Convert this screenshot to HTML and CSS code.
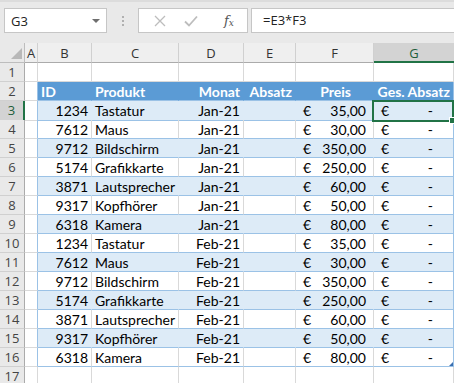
FILE: index.html
```html
<!DOCTYPE html>
<html lang="de">
<head>
<meta charset="utf-8">
<title>Excel</title>
<link rel="stylesheet" href="styles.css">
</head>
<body>
<div class="app">
  <div class="toolbar">
    <div class="namebox"><span>G3</span><span class="arrow"></span></div>
    <div class="dots"><i></i><i></i><i></i></div>
    <div class="fbtns">
      <svg class="ic" width="12" height="12" viewBox="0 0 12 12"><path d="M1 1 L11 11 M11 1 L1 11" stroke="#bdbdbd" stroke-width="1.3" fill="none"/></svg>
      <svg class="ic" width="14" height="12" viewBox="0 0 14 12"><path d="M1 6.5 L5 10.5 L13 1.5" stroke="#bdbdbd" stroke-width="1.8" fill="none"/></svg>
      <span class="fx">f<sub>x</sub></span>
    </div>
    <div class="finput">=E3*F3</div>
  </div>

  <div class="sheet">
    <div class="row hdr">
      <div class="corner"><span class="tri"></span></div>
      <div class="ch">A</div><div class="ch">B</div><div class="ch">C</div><div class="ch">D</div><div class="ch">E</div><div class="ch">F</div><div class="ch sel">G</div>
    </div>
    <div class="row r1">
      <div class="rh">1</div><div class="c"></div><div class="c"></div><div class="c"></div><div class="c"></div><div class="c"></div><div class="c"></div><div class="c"></div>
    </div>
    <div class="row thead">
      <div class="rh">2</div><div class="c a"></div>
      <div class="c t">ID</div><div class="c t">Produkt</div><div class="c t r">Monat</div><div class="c t r">Absatz</div><div class="c t r price">Preis</div><div class="c t r last">Ges. Absatz</div>
    </div>
    <div class="row band">
      <div class="rh sel">3</div><div class="c a"></div>
      <div class="c t r">1234</div><div class="c t">Tastatur</div><div class="c t r">Jan-21</div><div class="c t"></div>
      <div class="c t acc"><span>€</span><span>35,00</span></div>
      <div class="c t last acc g active"><span>€</span><span>-</span><i class="handle"></i></div>
    </div>
    <div class="row plain">
      <div class="rh">4</div><div class="c a"></div>
      <div class="c t r">7612</div><div class="c t">Maus</div><div class="c t r">Jan-21</div><div class="c t"></div>
      <div class="c t acc"><span>€</span><span>30,00</span></div>
      <div class="c t last acc g"><span>€</span><span>-</span></div>
    </div>
    <div class="row band">
      <div class="rh">5</div><div class="c a"></div>
      <div class="c t r">9712</div><div class="c t">Bildschirm</div><div class="c t r">Jan-21</div><div class="c t"></div>
      <div class="c t acc"><span>€</span><span>350,00</span></div>
      <div class="c t last acc g"><span>€</span><span>-</span></div>
    </div>
    <div class="row plain">
      <div class="rh">6</div><div class="c a"></div>
      <div class="c t r">5174</div><div class="c t">Grafikkarte</div><div class="c t r">Jan-21</div><div class="c t"></div>
      <div class="c t acc"><span>€</span><span>250,00</span></div>
      <div class="c t last acc g"><span>€</span><span>-</span></div>
    </div>
    <div class="row band">
      <div class="rh">7</div><div class="c a"></div>
      <div class="c t r">3871</div><div class="c t">Lautsprecher</div><div class="c t r">Jan-21</div><div class="c t"></div>
      <div class="c t acc"><span>€</span><span>60,00</span></div>
      <div class="c t last acc g"><span>€</span><span>-</span></div>
    </div>
    <div class="row plain">
      <div class="rh">8</div><div class="c a"></div>
      <div class="c t r">9317</div><div class="c t">Kopfhörer</div><div class="c t r">Jan-21</div><div class="c t"></div>
      <div class="c t acc"><span>€</span><span>50,00</span></div>
      <div class="c t last acc g"><span>€</span><span>-</span></div>
    </div>
    <div class="row band">
      <div class="rh">9</div><div class="c a"></div>
      <div class="c t r">6318</div><div class="c t">Kamera</div><div class="c t r">Jan-21</div><div class="c t"></div>
      <div class="c t acc"><span>€</span><span>80,00</span></div>
      <div class="c t last acc g"><span>€</span><span>-</span></div>
    </div>
    <div class="row plain">
      <div class="rh">10</div><div class="c a"></div>
      <div class="c t r">1234</div><div class="c t">Tastatur</div><div class="c t r">Feb-21</div><div class="c t"></div>
      <div class="c t acc"><span>€</span><span>35,00</span></div>
      <div class="c t last acc g"><span>€</span><span>-</span></div>
    </div>
    <div class="row band">
      <div class="rh">11</div><div class="c a"></div>
      <div class="c t r">7612</div><div class="c t">Maus</div><div class="c t r">Feb-21</div><div class="c t"></div>
      <div class="c t acc"><span>€</span><span>30,00</span></div>
      <div class="c t last acc g"><span>€</span><span>-</span></div>
    </div>
    <div class="row plain">
      <div class="rh">12</div><div class="c a"></div>
      <div class="c t r">9712</div><div class="c t">Bildschirm</div><div class="c t r">Feb-21</div><div class="c t"></div>
      <div class="c t acc"><span>€</span><span>350,00</span></div>
      <div class="c t last acc g"><span>€</span><span>-</span></div>
    </div>
    <div class="row band">
      <div class="rh">13</div><div class="c a"></div>
      <div class="c t r">5174</div><div class="c t">Grafikkarte</div><div class="c t r">Feb-21</div><div class="c t"></div>
      <div class="c t acc"><span>€</span><span>250,00</span></div>
      <div class="c t last acc g"><span>€</span><span>-</span></div>
    </div>
    <div class="row plain">
      <div class="rh">14</div><div class="c a"></div>
      <div class="c t r">3871</div><div class="c t">Lautsprecher</div><div class="c t r">Feb-21</div><div class="c t"></div>
      <div class="c t acc"><span>€</span><span>60,00</span></div>
      <div class="c t last acc g"><span>€</span><span>-</span></div>
    </div>
    <div class="row band">
      <div class="rh">15</div><div class="c a"></div>
      <div class="c t r">9317</div><div class="c t">Kopfhörer</div><div class="c t r">Feb-21</div><div class="c t"></div>
      <div class="c t acc"><span>€</span><span>50,00</span></div>
      <div class="c t last acc g"><span>€</span><span>-</span></div>
    </div>
    <div class="row plain">
      <div class="rh">16</div><div class="c a"></div>
      <div class="c t r">6318</div><div class="c t">Kamera</div><div class="c t r">Feb-21</div><div class="c t"></div>
      <div class="c t acc"><span>€</span><span>80,00</span></div>
      <div class="c t last acc g corner-end"><span>€</span><span>-</span><i class="resize"></i></div>
    </div>
    <div class="row r17">
      <div class="rh">17</div><div class="c"></div><div class="c"></div><div class="c"></div><div class="c"></div><div class="c"></div><div class="c"></div><div class="c"></div>
    </div>
  </div>
</div>
</body>
</html>
```

FILE: styles.css
```css
html, body {
  margin: 0;
  padding: 0;
  overflow: hidden;
  background: #ffffff;
}
.app {
  width: 454px;
  height: 383px;
  overflow: hidden;
  font-family: Lato, "Liberation Sans", sans-serif;
  font-size: 14px;
  color: #000;
}
.toolbar {
  height: 43px;
  box-sizing: border-box;
  background: #e9e9e9;
  border-top: 2px solid #dcdcdc;
  display: flex;
  align-items: flex-start;
  padding: 6px 0 0 4px;
}
.namebox {
  width: 103px;
  height: 25px;
  box-sizing: border-box;
  background: #fff;
  border: 1px solid #c6c6c6;
  display: flex;
  align-items: center;
  justify-content: space-between;
  padding: 0 6px 0 6px;
  font-family: "Open Sans", sans-serif;
  font-size: 13px;
  color: #222;
}
.arrow {
  width: 0;
  height: 0;
  border-left: 4px solid transparent;
  border-right: 4px solid transparent;
  border-top: 4px solid #6e6e6e;
}
.dots {
  width: 31px;
  height: 25px;
  display: flex;
  flex-direction: column;
  align-items: center;
  justify-content: center;
  gap: 2px;
}
.dots i {
  display: block;
  width: 2px;
  height: 2px;
  background: #b0b0b0;
}
.fbtns {
  width: 110px;
  height: 25px;
  box-sizing: border-box;
  background: #fff;
  border: 1px solid #c6c6c6;
  display: flex;
  align-items: center;
  padding-left: 15px;
  gap: 18px;
}
.fx {
  font-family: "DejaVu Serif", serif;
  font-style: italic;
  font-size: 13px;
  color: #555;
  margin-left: 8px;
}
.fx sub {
  font-size: 9px;
  vertical-align: -1px;
}
.finput {
  margin-left: 3px;
  flex: 1;
  height: 25px;
  box-sizing: border-box;
  background: #fff;
  border: 1px solid #c6c6c6;
  border-right: none;
  padding-left: 11px;
  line-height: 23px;
  font-family: "Open Sans", sans-serif;
  font-size: 13px;
  color: #222;
}

.sheet {
  display: flex;
  flex-direction: column;
}
.row {
  display: grid;
  grid-template-columns: 25px 13px 54px 87px 65px 52px 78px 80px;
  height: 19px;
}
.row.hdr {
  height: 20px;
}
.c, .ch, .rh, .corner {
  box-sizing: border-box;
  border-right: 1px solid #d9d9d9;
  border-bottom: 1px solid #d9d9d9;
  white-space: nowrap;
  overflow: hidden;
  line-height: 19px;
  padding: 0 3px;
}
.corner {
  background: #e9e9e9;
  border-right: 1px solid #bdbdbd;
  border-bottom: 1px solid #bdbdbd;
  display: flex;
  align-items: flex-end;
  justify-content: flex-end;
  padding: 0 2px 3px 0;
}
.tri {
  width: 0;
  height: 0;
  border-left: 11px solid transparent;
  border-bottom: 11px solid #b8b8b8;
}
.ch {
  background: #efefef;
  border-right: 1px solid #d0d0d0;
  border-bottom: 1px solid #ababab;
  text-align: center;
  color: #333;
  line-height: 20px;
  padding: 0;
  font-family: "Open Sans", sans-serif;
  font-size: 13px;
}
.ch.sel {
  background: #d3d3d3;
  border-bottom: 2px solid #217346;
  color: #1e5e3a;
  border-right: none;
}
.rh {
  background: #e9e9e9;
  border-right: 1px solid #ababab;
  border-bottom: 1px solid #d0d0d0;
  text-align: center;
  color: #444;
  padding: 0;
  font-family: "Open Sans", sans-serif;
  font-size: 13px;
}
.rh.sel {
  background: #d3d3d3;
  border-right: 2px solid #217346;
  color: #1e5e3a;
}
.c.a {
  border-right-color: #9bc2e6;
}
.c.r {
  text-align: right;
}
.c.t {
  border-bottom-color: #9bc2e6;
}
.c.last {
  border-right-color: #9bc2e6;
}
.band .c.t {
  background: #ddebf7;
  border-right-color: #ddebf7;
}
.band .c.t.last {
  border-right-color: #9bc2e6;
}
.thead .c.t {
  background: #5b9bd5;
  border-right-color: #5b9bd5;
  color: #fff;
  font-weight: bold;
}
.thead .c.t.last {
  border-right-color: #9bc2e6;
}
.thead .c.price {
  padding-right: 22px;
}
.r1 .c {
  border-bottom-color: #d9d9d9;
}
.acc {
  display: flex;
  justify-content: space-between;
  padding: 0 7px 0 7px;
}
.acc.g {
  padding: 0 20px 0 7px;
}
.active {
  position: relative;
  overflow: visible;
}
.active::after {
  content: "";
  position: absolute;
  left: -2px;
  top: -1px;
  right: -1px;
  bottom: -2px;
  border: 2px solid #217346;
}
.handle {
  position: absolute;
  right: -3px;
  bottom: -4px;
  width: 5px;
  height: 5px;
  background: #217346;
  border: 1px solid #fff;
  z-index: 2;
}
.corner-end {
  position: relative;
}
.resize {
  position: absolute;
  right: 0;
  bottom: 0;
  width: 0;
  height: 0;
  border-left: 4px solid transparent;
  border-bottom: 4px solid #3a6fb0;
}
.row.r17 {
  height: 19px;
}
```
